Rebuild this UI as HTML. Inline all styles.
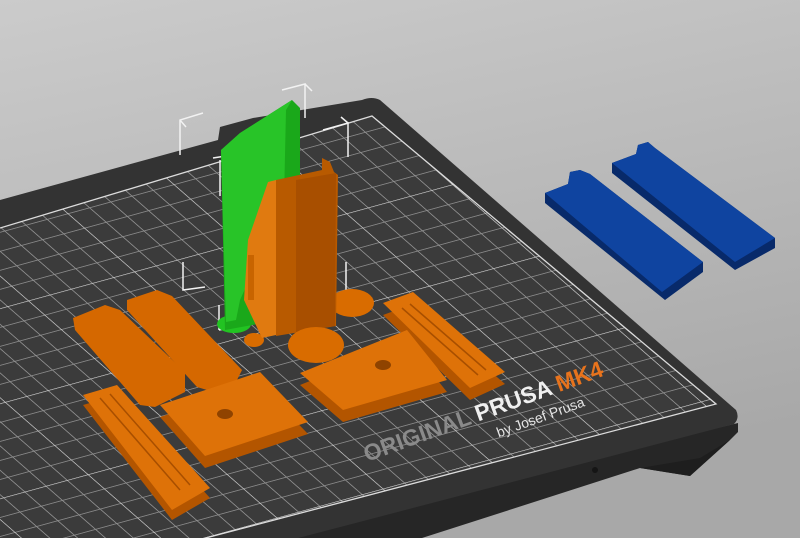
<!DOCTYPE html>
<html><head><style>
html,body{margin:0;padding:0;width:800px;height:538px;overflow:hidden;background:#c4c4c4;}
svg{display:block}
</style></head><body>
<svg width="800" height="538" viewBox="0 0 800 538" xmlns="http://www.w3.org/2000/svg">
<defs>
<linearGradient id="bg" x1="0" y1="0" x2="0.3" y2="1">
<stop offset="0" stop-color="#cbcbcb"/><stop offset="1" stop-color="#a8a8a8"/>
</linearGradient>
<pattern id="grid" patternUnits="userSpaceOnUse" width="110" height="110" patternTransform="matrix(0.753,0.658,-0.964,0.264,370,112)">
<g stroke="#909090" stroke-width="0.9" fill="none">
<path d="M22 0V110M44 0V110M66 0V110M88 0V110M0 22H110M0 44H110M0 66H110M0 88H110"/>
</g>
<g stroke="#dcdcdc" stroke-width="1.4" fill="none"><path d="M0 0V110M0 0H110"/></g>
</pattern>
<clipPath id="gc"><polygon points="0,228 372,116 716,404 0,592"/></clipPath>
</defs>
<rect width="800" height="538" fill="url(#bg)"/>
<polygon points="738,423 738,432 730,440 690,476 640,468 422,538 0,538 0,600" fill="#262626"/>
<polygon points="640,468 690,476 730,440 700,458" fill="#1e1e1e"/>
<circle cx="595" cy="470" r="3" fill="#151515"/>
<path d="M0,200 L218,140 L220,127 L253,118 L362,100 Q372,96 380,100 L736,410 Q740,418 734,424 L0,616 Z" fill="#333333"/>
<polygon points="0,228 372,116 716,404 0,592" fill="#3b3b3b"/>
<rect width="800" height="538" fill="url(#grid)" clip-path="url(#gc)"/>
<polyline points="0,228 372,116 716,404 0,592" fill="none" stroke="#dcdcdc" stroke-width="1.3"/>
<g transform="translate(367,462) rotate(-20)" font-family="Liberation Sans, sans-serif" font-weight="bold">
<text x="0" y="0" font-size="23" fill="#8a8a8a">ORIGINAL <tspan fill="#f0f0f0">PRUSA</tspan> <tspan fill="#e8731c">MK4</tspan></text>
<text x="132" y="22" font-size="14" font-weight="normal" fill="#e6e6e6">by Josef Prusa</text>
</g>
<g>
<polygon points="545,193 568,184 570,172 580,170 590,174 703,262 703,272 665,300 545,203" fill="#082a6a"/>
<polygon points="545,193 568,184 570,172 580,170 590,174 703,262 662,292" fill="#0f44a0"/>
<polygon points="612,163 636,154 638,145 648,142 655,148 775,238 775,248 735,270 612,173" fill="#082a6a"/>
<polygon points="612,163 636,154 638,145 648,142 655,148 775,238 735,262" fill="#0f44a0"/>
</g>
<g stroke="#f2f2f2" stroke-width="1.5" fill="none">
<path d="M180,155V120L203,113M180,120L186,127"/>
<path d="M282,90L305,84V118M305,84L312,91"/>
<path d="M323,130L348,123V157M341,117L348,123"/>
<path d="M213,158L245,153M220,160V196"/>
<path d="M183,262V290L205,287"/>
<path d="M219,330V305M219,330L240,326"/>
<path d="M346,290V262"/>
</g>
<ellipse cx="234" cy="324" rx="17" ry="9" fill="#22c322"/>
<polygon points="221,150 240,133 292,100 300,108 300,180 280,320 225,330" fill="#1aa81a"/>
<polygon points="221,150 240,133 292,100 286,110 284,200 258,260 240,300 236,320 226,322" fill="#28c428"/>
<ellipse cx="352" cy="303" rx="22" ry="14" fill="#d96c00"/>
<ellipse cx="254" cy="340" rx="10" ry="7" fill="#d96c00"/>
<polygon points="268,182 248,240 244,300 262,338 276,335 276,180" fill="#e07a10"/>
<polygon points="276,180 322,170 322,158 330,162 334,172 338,175 336,326 276,336" fill="#b85a00"/>
<polygon points="296,180 336,173 335,326 296,332" fill="#a84f00"/>
<rect x="248" y="255" width="6" height="45" fill="#c86400"/>
<ellipse cx="316" cy="345" rx="28" ry="18" fill="#d96c00"/>
<polygon points="383,315 413,304 505,384 470,400" fill="#b35500"/>
<polygon points="383,303 413,292 505,372 470,388" fill="#de7208"/>
<path d="M402,308 L478,375 M410,304 L486,370" stroke="#a84f00" stroke-width="1.5"/>
<polygon points="300,385 407,342 447,392 343,422" fill="#b35500"/>
<polygon points="300,373 407,330 447,380 343,410" fill="#de7208"/>
<ellipse cx="383" cy="365" rx="8" ry="5" fill="#8f4300"/>
<polygon points="73,318 105,305 120,310 185,372 185,392 155,407 140,405 75,330" fill="#d56800"/>
<polygon points="127,300 157,290 172,296 242,370 237,380 207,390 197,387 127,310" fill="#d56800"/>
<polygon points="83,405 117,395 210,498 172,520" fill="#b35500"/>
<polygon points="83,395 117,385 210,488 172,510" fill="#de7208"/>
<path d="M100,398 L180,490 M110,394 L190,485" stroke="#a84f00" stroke-width="1.5"/>
<polygon points="160,417 260,384 308,434 205,468" fill="#b35500"/>
<polygon points="160,405 260,372 308,422 205,456" fill="#de7208"/>
<ellipse cx="225" cy="414" rx="8" ry="5" fill="#8f4300"/>
</svg>
</body></html>
